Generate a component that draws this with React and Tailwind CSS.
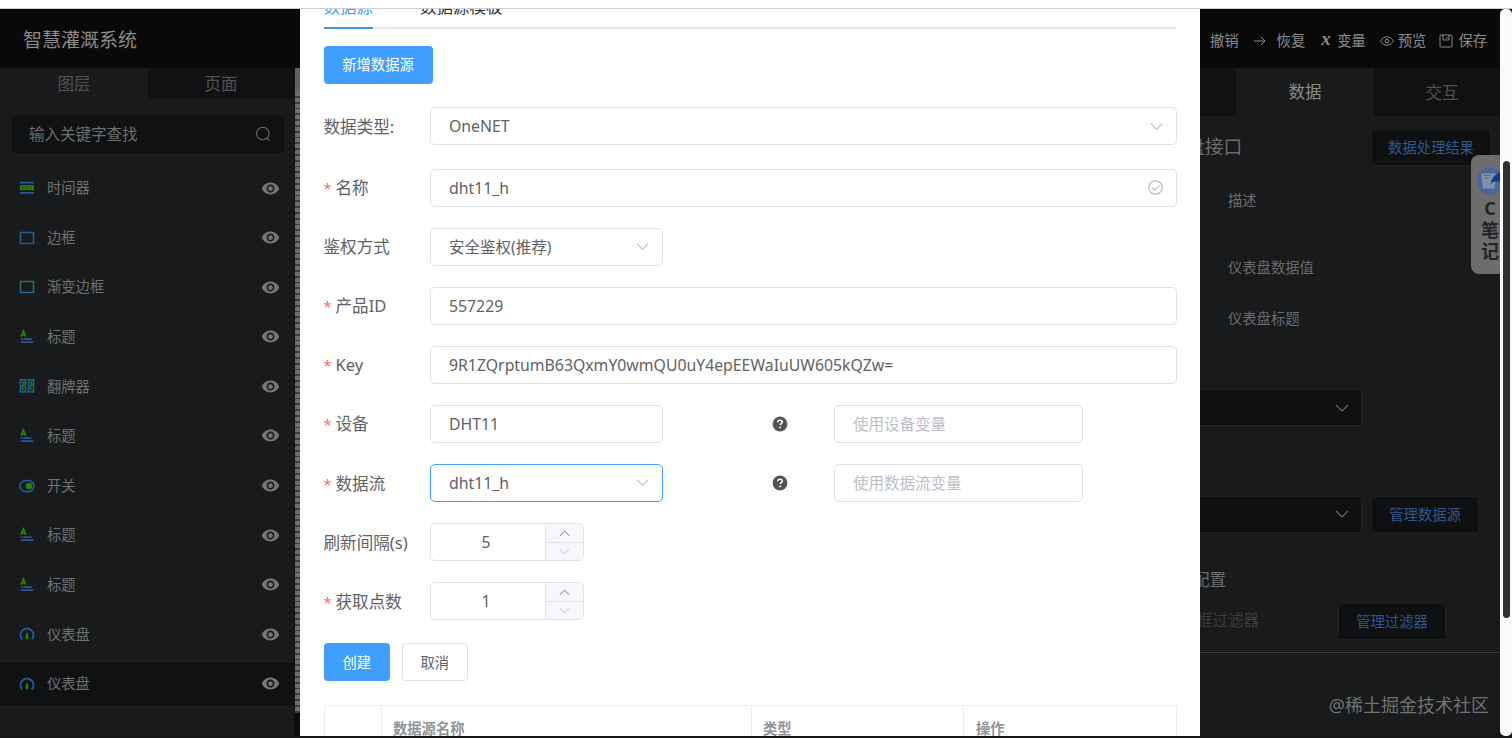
import clsx from 'clsx'
import { MdVisibility } from 'react-icons/md'

const layers = [
  { name: '时间器', icon: 'timer' },
  { name: '边框', icon: 'border' },
  { name: '渐变边框', icon: 'gradient' },
  { name: '标题', icon: 'title' },
  { name: '翻牌器', icon: 'flip' },
  { name: '标题', icon: 'title' },
  { name: '开关', icon: 'switch' },
  { name: '标题', icon: 'title' },
  { name: '标题', icon: 'title' },
  { name: '仪表盘', icon: 'gauge' },
  { name: '仪表盘', icon: 'gauge', active: true },
]

const BLUE = '#225b96'
const GREEN = '#268311'

function LayerIcon({ type }) {
  return (
    <svg width="16" height="16" viewBox="0 0 16 16" fill="none" className="shrink-0">
      {type === 'timer' && (
        <>
          <path d="M1 2.7h14M1 12.9h14" stroke={BLUE} strokeWidth="1.7" />
          <path d="M1 5.2h14v5H1z" fill={GREEN} />
          <path d="M3.6 6.2v3M6 6.7h1M6 8.7h1M8.8 6.2v3M11.5 6.7h1M11.5 8.7h1" stroke="#143d18" strokeWidth="1" />
        </>
      )}
      {type === 'border' && <path d="M1.5 2.5h13v11h-13z" stroke={BLUE} strokeWidth="1.6" />}
      {type === 'gradient' && (
        <>
          <defs>
            <linearGradient id="frame" x1="0" y1="0" x2="0" y2="1">
              <stop offset="0" stopColor="#2b7c27" />
              <stop offset="1" stopColor="#266590" />
            </linearGradient>
          </defs>
          <path d="M1.5 2.5h13v11h-13z" stroke="url(#frame)" strokeWidth="1.6" />
        </>
      )}
      {type === 'title' && (
        <>
          <path d="M2.1 7.7 4.4 2 6.7 7.7M2.9 6h3" stroke={GREEN} strokeWidth="1.7" />
          <path d="M1.8 10.2h1.6M4.2 10.2h8.4M1.8 13.2h12.6" stroke="#2557a0" strokeWidth="1.8" />
        </>
      )}
      {type === 'flip' && (
        <>
          <path d="M1.5 1.9h5v12h-5zM9.5 1.9h5v12h-5z" stroke={BLUE} strokeWidth="1.7" />
          <path d="M3.1 4.5h1.7v3H3.4v3.6h1.7M11.1 4.5h1.7v3h-1.4v3.6h1.7" stroke={GREEN} strokeWidth="1.3" />
        </>
      )}
      {type === 'switch' && (
        <>
          <rect x="1" y="2.6" width="14" height="11" rx="5.5" stroke={BLUE} strokeWidth="1.7" />
          <circle cx="10" cy="8.1" r="3.4" fill={GREEN} />
        </>
      )}
      {type === 'gauge' && (
        <>
          <path d="M3.2 13.4A6.5 6.5 0 1 1 12.8 13.4" stroke={BLUE} strokeWidth="1.8" />
          <path d="M8 5 9.6 11.4 9 13.2H7L6.4 11.4z" fill={GREEN} />
        </>
      )}
    </svg>
  )
}

function Chevron({ className, up, width = 13 }) {
  return (
    <svg width={width} height={width} viewBox="0 0 14 14" fill="none" stroke="currentColor" strokeWidth="1.1" className={clsx('shrink-0', className)}>
      <path d={up ? 'M1 10 7 4l6 6' : 'M1 4l6 6 6-6'} />
    </svg>
  )
}

function Sidebar() {
  return (
    <aside className="flex w-[300px] shrink-0 flex-col bg-[#0b0c0d]">
      <div className="flex h-[59px] shrink-0 items-center bg-[#090909] pl-[23px] pt-[3px] text-[19px] text-[#8b8b8b]">智慧灌溉系统</div>
      <div className="flex min-h-0 flex-1">
        <div className="flex w-[295px] flex-col border-r border-dotted border-[#050505] bg-[#191a1b]">
          <div className="flex h-[31px] shrink-0 text-[16.5px] text-[#505152]">
            <div className="flex w-[148px] items-center justify-center pt-0.5">图层</div>
            <div className="flex flex-1 items-center justify-center rounded-bl-md bg-[#101112] pt-0.5">页面</div>
          </div>
          <div className="mx-3 mr-[10px] mt-4 flex h-[38px] shrink-0 items-center justify-between rounded bg-[#101113] pl-[17px] pr-[13px] text-[15.5px] text-[#6d6e70]">
            <span className="pt-0.5">输入关键字查找</span>
            <svg width="16" height="16" viewBox="0 0 16 16" fill="none" stroke="currentColor" strokeWidth="1.1">
              <circle cx="7.8" cy="7.5" r="6.2" />
              <path d="m12 12 2.6 2.6" />
            </svg>
          </div>
          <div className="mt-[14px] flex flex-col gap-[7.6px]">
            {layers.map((layer, i) => (
              <div key={i} className={clsx('flex h-[42px] items-center pl-[19px] pr-[14px]', layer.active && 'bg-[#101112]')}>
                <LayerIcon type={layer.icon} />
                <span className="ml-3 flex-1 text-[14.3px] text-[#707172]">{layer.name}</span>
                <MdVisibility size={19} color="#747576" />
              </div>
            ))}
          </div>
        </div>
        {/* canvas ruler */}
        <div className="flex h-[645px] flex-1 flex-col">
          <div className="h-6 bg-[#626262]" />
          <div className="flex-1 bg-[repeating-linear-gradient(180deg,#6e6e6e_0px,#6e6e6e_4px,#3e3e3e_4px,#3e3e3e_5.8px)]" />
        </div>
      </div>
    </aside>
  )
}

function FormRow({ label, required, children, className }) {
  return (
    <div className={clsx('flex h-[38px] items-center', className)}>
      <div className="w-[106.5px] shrink-0 whitespace-nowrap pt-[2px] text-[16.6px] text-[#606266]">
        {required && <span className="mr-[4px] text-[14.5px] text-[#f56c6c]">*</span>}
        {label}
      </div>
      {children}
    </div>
  )
}

function Field({ value, placeholder, focused, className, children }) {
  const isHan = value && /^[\u4e00-\u9fff]/.test(value)
  return (
    <div
      className={clsx(
        'flex h-[38px] shrink-0 items-center justify-between rounded-[5px] border pl-[18px] pr-[13px]',
        focused ? 'border-[#409eff]' : 'border-[#dfe2e8]',
        className,
      )}
    >
      {value ? (
        <span className={clsx('pt-[2px] text-[#606266]', isHan ? 'text-[15.5px]' : 'text-[15.8px]')}>{value}</span>
      ) : (
        <span className="pt-px text-[15.5px] text-[#bcbfc6]">{placeholder}</span>
      )}
      {children}
    </div>
  )
}

function NumberField({ value }) {
  return (
    <div className="flex h-[38px] w-[154px] overflow-hidden rounded-[5px] border border-[#dfe2e8]">
      <div className="flex flex-1 items-center justify-center pr-[4px] pt-[2px] text-[15.8px] text-[#606266]">{value}</div>
      <div className="flex w-[38px] flex-col border-l border-[#dfe2e8] bg-[#f5f7fa]">
        <div className="flex flex-1 items-center justify-center border-b border-[#dfe2e8] pt-px">
          <Chevron up width={11} className="text-[#606266]" />
        </div>
        <div className="flex flex-1 items-center justify-center">
          <Chevron width={11} className="text-[#b8bbc2]" />
        </div>
      </div>
    </div>
  )
}

function HelpIcon() {
  return (
    <svg width="16" height="16" viewBox="0 0 16 16" className="ml-[109px] mr-[46px] shrink-0">
      <circle cx="8" cy="8" r="7.4" fill="#535456" />
      <path d="M5.8 6.3c.1-1.3 1-2 2.3-2s2.2.8 2.2 1.8c0 1.5-2 1.5-2 3" fill="none" stroke="#fff" strokeWidth="1.5" />
      <circle cx="8.2" cy="11.4" r=".95" fill="#fff" />
    </svg>
  )
}

function DataSourceDialog() {
  return (
    <main className="flex w-[900px] shrink-0 flex-col overflow-hidden bg-white pl-[23.5px] pr-6">
      <div className="flex h-5 shrink-0 gap-[47px] border-b-2 border-[#e4e7ed] text-[16.5px]">
        <div className="-mb-0.5 flex h-5 flex-col justify-end border-b-2 border-[#3f93e8] text-[#409eff]">
          <span className="mb-[8px] h-6 leading-6">数据源</span>
        </div>
        <div className="flex h-5 flex-col justify-end text-[#303133]">
          <span className="mb-[10px] h-6 leading-6">数据源模板</span>
        </div>
      </div>
      <button className="mt-[17px] h-[37.5px] w-[109px] shrink-0 rounded bg-[#409eff] text-[14.3px] text-white">新增数据源</button>

      <FormRow label="数据类型:" className="mt-[23.5px] shrink-0">
        <Field value="OneNET" className="w-[746.5px]">
          <Chevron className="text-[#b4b7be]" />
        </Field>
      </FormRow>
      <div className="mt-[23.5px] flex shrink-0 flex-col gap-[21.1px]">
        <FormRow label="名称" required>
          <Field value="dht11_h" className="w-[746.5px]">
            <svg width="15" height="15" viewBox="0 0 15 15" fill="none" stroke="#b4b7be" strokeWidth="1.1">
              <circle cx="7.5" cy="7.5" r="6.7" />
              <path d="m4 7.4 2.6 2.6 4.6-4.4" />
            </svg>
          </Field>
        </FormRow>
        <FormRow label="鉴权方式">
          <Field value="安全鉴权(推荐)" className="w-[233px]">
            <Chevron className="text-[#b4b7be]" />
          </Field>
        </FormRow>
        <FormRow label="产品ID" required>
          <Field value="557229" className="w-[746.5px]" />
        </FormRow>
        <FormRow label="Key" required>
          <Field value="9R1ZQrptumB63QxmY0wmQU0uY4epEEWaIuUW605kQZw=" className="w-[746.5px]" />
        </FormRow>
        <FormRow label="设备" required>
          <Field value="DHT11" className="w-[233px]" />
          <HelpIcon />
          <Field placeholder="使用设备变量" className="w-[249px]" />
        </FormRow>
        <FormRow label="数据流" required>
          <Field value="dht11_h" focused className="w-[233px]">
            <Chevron className="text-[#b4b7be]" />
          </Field>
          <HelpIcon />
          <Field placeholder="使用数据流变量" className="w-[249px]" />
        </FormRow>
        <FormRow label="刷新间隔(s)">
          <NumberField value="5" />
        </FormRow>
        <FormRow label="获取点数" required>
          <NumberField value="1" />
        </FormRow>
      </div>

      <div className="mt-[23px] flex shrink-0 gap-[11.5px] text-[14.3px]">
        <button className="h-[38px] w-[66.5px] rounded bg-[#409eff] pt-px text-white">创建</button>
        <button className="h-[38px] w-[66.5px] rounded border border-[#dfe2e8] pt-px text-[#606266]">取消</button>
      </div>

      <div className="mt-[23.5px] flex h-[46px] w-[853.5px] shrink-0 border border-[#ebeef5] text-[14.3px] font-bold leading-[46px] text-[#909399]">
        <div className="w-[57.5px] border-r border-[#ebeef5]" />
        <div className="w-[370px] border-r border-[#ebeef5] pl-[11px]">数据源名称</div>
        <div className="w-[212px] border-r border-[#ebeef5] pl-[11px]">类型</div>
        <div className="pl-[12px]">操作</div>
      </div>
    </main>
  )
}

function DarkButton({ children, className }) {
  return (
    <button className={clsx('h-[37px] shrink-0 rounded-[3px] border border-[#1d1f21] bg-[#0f1012] pt-px text-[14.3px] text-[#2f5890]', className)}>
      {children}
    </button>
  )
}

function DarkSelect() {
  return (
    <div className="flex h-[37px] w-[162px] items-center justify-end rounded-r-[3px] border border-l-0 border-[#1e2022] bg-[#0f1012] pr-[12px]">
      <Chevron className="text-[#6d6e70]" width={14} />
    </div>
  )
}

function NotesTab() {
  return (
    <div className="absolute right-0 top-[146px] flex h-[119px] w-[29px] flex-col items-center overflow-hidden rounded-l-lg bg-[#6d6d6e] pl-[9px] pt-[12px] text-[18px] font-bold leading-[21.5px] text-[#222325]">
      <svg width="28" height="28" viewBox="0 0 28 28" className="shrink-0">
        <circle cx="14" cy="14" r="13.5" fill="#49669a" />
        <path d="M5 6.5h15.5l-2 15H7z" fill="#8390a8" />
        <path d="M7.5 8.5h7M8.5 11h4" stroke="#596b8d" strokeWidth="1" />
        <path d="M15 16c1-6 5-10 13-12v9c-4 2-8 1-11 2z" fill="#123d96" />
        <path d="m14 17.5 5-5" stroke="#123d96" strokeWidth=".8" />
      </svg>
      <span className="mt-[3px]">C</span>
      <span>笔</span>
      <span>记</span>
    </div>
  )
}

function ConfigPanel() {
  return (
    <aside className="relative flex w-[300px] shrink-0 flex-col overflow-hidden bg-[#191a1b] text-[14.3px] text-[#6b6c6e]">
      <div className="flex h-[59px] shrink-0 items-center bg-[#090909] pl-[10px] pt-1 text-[#8b8b8b]">
        <span>撤销</span>
        <svg width="12" height="12" viewBox="0 0 12 12" fill="none" stroke="currentColor" className="ml-[15px]">
          <path d="M0 6h11M7 2l4 4-4 4" />
        </svg>
        <span className="ml-[11px]">恢复</span>
        <span className="ml-[16px] w-[10px] pb-[3px] font-['Liberation_Serif',serif] text-[19px] font-bold italic leading-4">x</span>
        <span className="ml-[6px]">变量</span>
        <svg width="14" height="14" viewBox="0 0 14 14" fill="none" stroke="currentColor" className="ml-[14px]">
          <path d="M.6 7C2 4.4 4.3 2.8 7 2.8S12 4.4 13.4 7C12 9.6 9.7 11.2 7 11.2S2 9.6.6 7z" />
          <circle cx="7" cy="7" r="1.9" />
        </svg>
        <span className="ml-[4px]">预览</span>
        <svg width="14" height="14" viewBox="0 0 14 14" fill="none" stroke="currentColor" className="ml-[13px]">
          <rect x="1" y="1" width="12" height="12" rx="1" />
          <path d="M4 1v5h6V1M8 3v1.5" />
        </svg>
        <span className="ml-[5px]">保存</span>
      </div>
      <div className="flex h-12 shrink-0 text-[16.5px]">
        <div className="w-9 bg-[#101112]" />
        <div className="flex w-[138px] items-center justify-center text-[#8b8b8b]">数据</div>
        <div className="flex flex-1 items-center justify-center bg-[#101112] pl-[10px] pt-[2px] text-[#505152]">交互</div>
      </div>

      <div className="mt-[12.5px] flex h-[37px] shrink-0 items-center justify-between pr-[9px]">
        <span className="-ml-[14px] text-[18.8px]">盘接口</span>
        <DarkButton className="w-[120px]">数据处理结果</DarkButton>
      </div>
      <div className="mt-[23.5px] flex shrink-0 flex-col pl-7 leading-6">
        <span>描述</span>
        <span className="mt-[43px]">仪表盘数据值</span>
        <span className="mt-[27px]">仪表盘标题</span>
      </div>

      <div className="mt-[58px] shrink-0">
        <DarkSelect />
      </div>
      <div className="mt-[69.5px] flex shrink-0 gap-[9px]">
        <DarkSelect />
        <DarkButton className="w-[108px]">管理数据源</DarkButton>
      </div>
      <span className="-ml-[7px] mt-[35.5px] shrink-0 text-[16.5px] leading-6">配置</span>
      <div className="mt-[10px] flex h-[38px] shrink-0 items-center">
        <span className="-ml-[3px] w-[141px] text-[15.5px] text-[#3b3d3f]">框过滤器</span>
        <DarkButton className="w-[108px]">管理过滤器</DarkButton>
      </div>
      <div className="mt-[12px] h-px shrink-0 bg-[#3a3b3c]" />
      <div className="mt-[37.5px] shrink-0 pr-[11px] text-right text-[18px] leading-7 text-[#707172]">@稀土掘金技术社区</div>
      <NotesTab />
    </aside>
  )
}

export default function App() {
  return (
    <div className="flex h-[738px] w-[1512px] flex-col overflow-hidden bg-white font-['Noto_Sans','Noto_Sans_CJK_SC',sans-serif]">
      <div className="h-[9px] shrink-0 border-b border-[#cfcfcf] bg-white" />
      <div className="flex h-[727px] shrink-0 bg-[#0b0b0b]">
        <Sidebar />
        <DataSourceDialog />
        <ConfigPanel />
        <div className="flex w-3 flex-col items-center rounded-[5px] bg-[#fafafa]">
          <div className="mt-[152px] h-[457px] w-[7px] rounded-full bg-[#2f3232]" />
        </div>
      </div>
      <div className="h-0.5 shrink-0 bg-[#171717]" />
    </div>
  )
}
